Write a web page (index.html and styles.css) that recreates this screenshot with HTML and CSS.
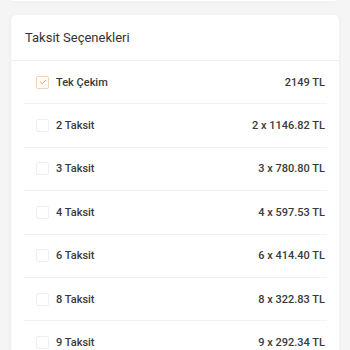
FILE: index.html
```html
<!DOCTYPE html>
<html lang="tr">
<head>
    <meta charset="UTF-8">
    <meta name="viewport" content="width=device-width, initial-scale=1.0">
    <title>Taksit Seçenekleri</title>
    <link rel="stylesheet" href="styles.css">
</head>
<body>
    <div class="page">
        <!-- Previous card (scrolled out) -->
        <div class="card card-prev"></div>

        <!-- Installment Options -->
        <div class="card">
            <div class="card-header">Taksit Seçenekleri</div>
            <ul class="options">
                <li class="option">
                    <span class="check checked">
                        <svg viewBox="0 0 10 10" width="8" height="8"><path d="M1.8 5.2 L4 7.2 L8.2 2.8" fill="none" stroke="#e8955a" stroke-width="1.2" stroke-linecap="round" stroke-linejoin="round"/></svg>
                    </span>
                    <span class="label">Tek Çekim</span>
                    <span class="price">2149 TL</span>
                </li>
                <li class="option">
                    <span class="check"></span>
                    <span class="label">2 Taksit</span>
                    <span class="price">2 x 1146.82 TL</span>
                </li>
                <li class="option">
                    <span class="check"></span>
                    <span class="label">3 Taksit</span>
                    <span class="price">3 x 780.80 TL</span>
                </li>
                <li class="option">
                    <span class="check"></span>
                    <span class="label">4 Taksit</span>
                    <span class="price">4 x 597.53 TL</span>
                </li>
                <li class="option">
                    <span class="check"></span>
                    <span class="label">6 Taksit</span>
                    <span class="price">6 x 414.40 TL</span>
                </li>
                <li class="option">
                    <span class="check"></span>
                    <span class="label">8 Taksit</span>
                    <span class="price">8 x 322.83 TL</span>
                </li>
                <li class="option">
                    <span class="check"></span>
                    <span class="label">9 Taksit</span>
                    <span class="price">9 x 292.34 TL</span>
                </li>
            </ul>
        </div>
    </div>
</body>
</html>
```

FILE: styles.css
```css
/* General Styles */
body {
    font-family: Roboto, 'Noto Sans', sans-serif;
    background-color: #f5f5f5;
    margin: 0;
    overflow: hidden;
    color: #333;
}

.page {
    padding: 0 11px;
}

.card {
    background-color: white;
    border-radius: 5px;
    box-shadow: 0 1px 4px rgba(0, 0, 0, 0.06);
}

.card-prev {
    height: 1px;
    margin-right: 3px;
    border-radius: 0 0 5px 5px;
    margin-bottom: 14px;
}

.card-header {
    height: 45px;
    line-height: 46px;
    padding: 0 14px;
    font-size: 13px;
    color: #333;
    border-bottom: 1px solid #eeeeee;
}

/* Option rows */
.options {
    list-style: none;
    margin: 0;
    padding: 0 12px 0 13px;
}

.option {
    display: flex;
    align-items: center;
    height: 42.4px;
    padding: 0 2px 0 12px;
    border-bottom: 1px solid #f2f2f2;
    font-size: 11px;
    font-weight: 500;
}

.check {
    width: 11px;
    height: 11px;
    border: 1px solid #efefef;
    border-radius: 2px;
    margin-right: 7px;
    display: flex;
    align-items: center;
    justify-content: center;
}

.check.checked {
    border-color: #f1d3bd;
}

.label {
    flex: 1;
    color: #3a3a3a;
}

.price {
    color: #3a3a3a;
}
```
